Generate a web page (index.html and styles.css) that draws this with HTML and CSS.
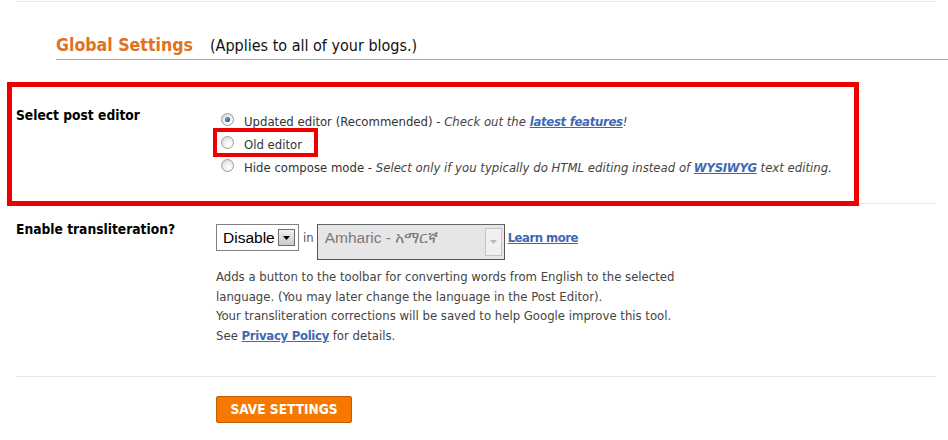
FILE: index.html
```html
<!DOCTYPE html>
<html>
<head>
<meta charset="utf-8">
<title>Global Settings</title>
<link rel="stylesheet" href="styles.css">
</head>
<body>
<div class="page">
  <div class="topline"></div>
  <div class="header">
    <h2 class="title">Global Settings</h2>
    <span class="subtitle">(Applies to all of your blogs.)</span>
  </div>

  <div class="setting setting-editor">
    <div class="label">Select post editor</div>
    <div class="options">
      <div class="radio-row"><span class="radio checked"></span><span class="opt">Updated editor (Recommended)</span> - <em>Check out the <a href="#" class="link">latest features</a>!</em></div>
      <div class="radio-row"><span class="radio"></span><span class="opt">Old editor</span></div>
      <div class="radio-row"><span class="radio"></span><span class="opt">Hide compose mode</span> - <em>Select only if you typically do HTML editing instead of <a href="#" class="link">WYSIWYG</a> text editing.</em></div>
    </div>
  </div>

  <div class="setting setting-translit">
    <div class="label">Enable transliteration?</div>
    <div class="options">
      <div class="select-row">
        <div class="select select-small"><span class="select-text">Disable</span><span class="select-btn"><svg width="7" height="4" viewBox="0 0 7 4"><path d="M0 0H7L3.5 4Z" fill="#000"/></svg></span></div>
        <span class="in">in</span>
        <div class="select select-lang"><span class="select-text muted">Amharic - አማርኛ</span><span class="select-btn disabled"><svg width="7" height="4" viewBox="0 0 7 4"><path d="M0 0H7L3.5 4Z" fill="#b8b8b8"/></svg></span></div>
        <a href="#" class="link learn">Learn more</a>
      </div>
      <p class="desc">Adds a button to the toolbar for converting words from English to the selected<br>language. (You may later change the language in the Post Editor).<br>Your transliteration corrections will be saved to help Google improve this tool.<br>See <a href="#" class="link">Privacy Policy</a> for details.</p>
    </div>
  </div>

  <div class="actions">
    <button class="save">SAVE SETTINGS</button>
  </div>

  <div class="mark mark-big"></div>
  <div class="mark mark-small"></div>
</div>
</body>
</html>
```

FILE: styles.css
```css
html, body {
  margin: 0;
  padding: 0;
  background: #fff;
}

.page {
  position: relative;
  width: 948px;
  height: 440px;
  overflow: hidden;
  font-family: "DejaVu Sans Condensed", "DejaVu Sans", sans-serif;
  font-size: 13px;
  color: #333;
}

.topline {
  margin: 1px 12px 0 16px;
  border-top: 1px solid #e8e8e8;
}

.header {
  margin-left: 56px;
  padding: 31px 0 2px;
  display: flex;
  align-items: baseline;
  gap: 17px;
  border-bottom: 1px solid #e39a55;
  height: 24px;
}

.title {
  margin: 0;
  font-size: 17.6px;
  line-height: 24px;
  font-weight: bold;
  color: #e0721f;
}

.subtitle {
  font-size: 16px;
  color: #111;
}

.setting {
  display: flex;
  margin: 0 12px 0 16px;
  border-bottom: 1px solid #e8e8e8;
}

.label {
  width: 200px;
  flex: none;
  font-weight: bold;
  font-size: 13.7px;
  line-height: 18px;
  color: #000;
}

.setting-editor {
  padding: 46px 0 25px;
}

.setting-editor .options {
  padding-top: 4px;
  margin-bottom: -1px;
}

.radio-row {
  display: flex;
  align-items: center;
  height: 23px;
  white-space: pre;
  color: #333;
}

.radio {
  width: 11px;
  height: 11px;
  border: 1px solid #9c9c9c;
  border-radius: 50%;
  background: radial-gradient(circle at 65% 70%, #ffffff 0%, #f2f2f2 40%, #cfcfcf 100%);
  margin: 0 10px 0 5px;
  position: relative;
  top: -2px;
  flex: none;
}

.radio.checked::after {
  content: "";
  position: absolute;
  left: 3px;
  top: 3px;
  width: 5px;
  height: 5px;
  border-radius: 50%;
  background: radial-gradient(circle at 35% 35%, #6fa3d8 0%, #1b5290 70%, #123a68 100%);
}

.radio-row em {
  color: #444;
}

.link {
  color: #3d68b4;
  font-weight: bold;
  letter-spacing: -0.3px;
  text-decoration: underline;
}

.setting-translit {
  padding: 16px 0 30px;
}

.setting-translit .options {
  padding-top: 4px;
}

.select-row {
  display: flex;
  align-items: flex-start;
  height: 35px;
}

.select {
  display: flex;
  align-items: center;
  justify-content: space-between;
  box-sizing: border-box;
  font-family: "Liberation Sans", Arial, sans-serif;
  font-size: 15.5px;
  color: #000;
}

.select-small {
  width: 83px;
  height: 27px;
  border: 1px solid #7f7f7f;
  background: #fff;
  padding: 0 3px 0 6px;
}

.select-btn {
  width: 15px;
  height: 15px;
  border: 1px solid #6d6d6d;
  background: linear-gradient(#f2f2f2, #c9c9c9);
  display: flex;
  align-items: center;
  justify-content: center;
}

.select-btn.disabled {
  height: 26px;
  border-color: #c4c4c4;
  background: #f0f0f0;
}

.in {
  margin: 6px 3px 0 4px;
  color: #555;
  font-size: 13px;
}

.select-lang {
  width: 188px;
  height: 36px;
  border: 1px solid #555;
  border-top-color: #666;
  background: #e6e6e6;
  padding: 0 2px 0 7px;
  align-items: stretch;
}

.select-lang .select-text {
  padding-top: 4px;
}

.select-lang .select-btn {
  margin-top: 3px;
}

.muted {
  color: #7a7a7a;
}

.learn {
  margin: 6px 0 0 3px;
  letter-spacing: -0.5px;
}

.desc {
  margin: 8px 0 0;
  line-height: 19.7px;
  color: #444;
}

.actions {
  padding: 19px 0 0 216px;
}

.save {
  width: 136px;
  height: 27px;
  background: #f77800;
  border: 1px solid #c65b00;
  border-radius: 2px;
  color: #fff;
  font-family: "DejaVu Sans Condensed", "DejaVu Sans", sans-serif;
  font-weight: bold;
  font-size: 13.6px;
  padding: 0;
}

.mark {
  position: absolute;
  border: 5px solid #ee0000;
  box-sizing: border-box;
}

.mark-big {
  left: 7px;
  top: 82px;
  width: 852px;
  height: 124px;
}

.mark-small {
  left: 213px;
  top: 128px;
  width: 105px;
  height: 29px;
  border-width: 4px;
}
```
